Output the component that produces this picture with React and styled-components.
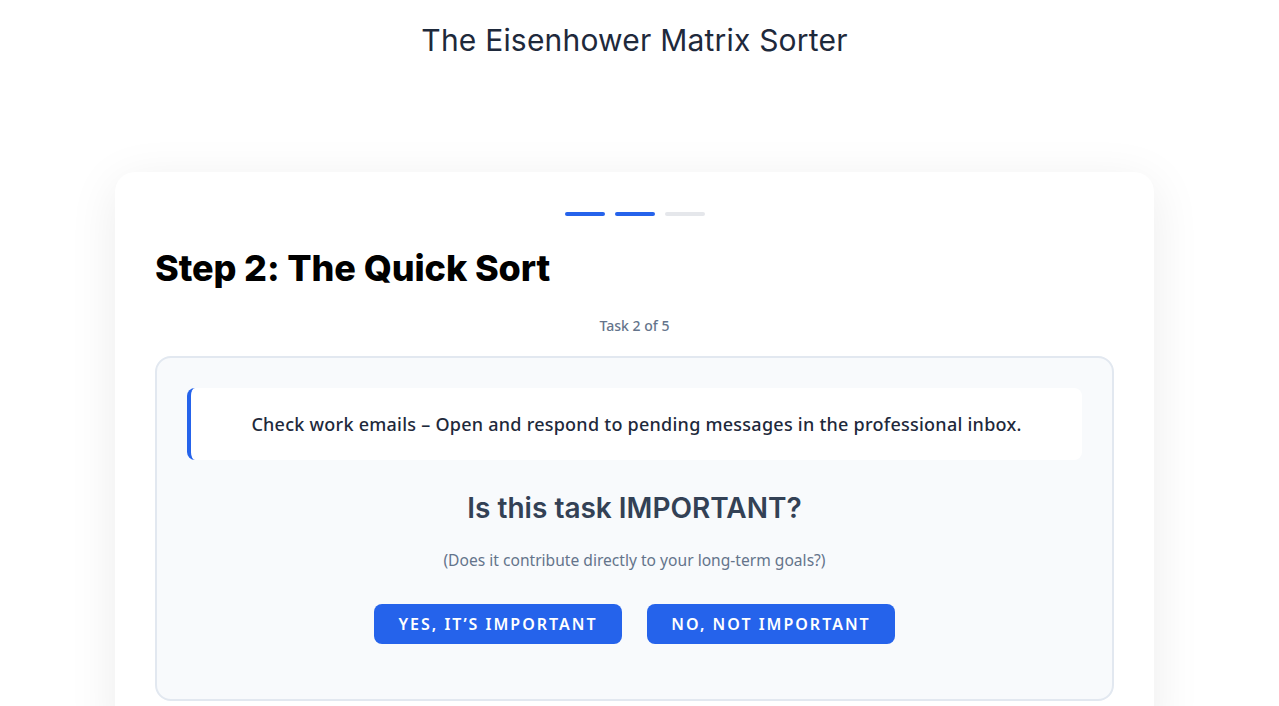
import React from 'react';
import styled, { createGlobalStyle } from 'styled-components';

const GlobalStyle = createGlobalStyle`
  * {
    box-sizing: border-box;
  }

  body {
    margin: 0;
    background: #ffffff;
    font-family: 'Noto Sans', 'Open Sans', sans-serif;
    color: #1e293b;
  }
`;

const Page = styled.div`
  display: flex;
  flex-direction: column;
  align-items: center;
  padding: 18px 20px 60px 10px;
`;

const AppTitle = styled.h1`
  margin: 0 0 110px 0;
  font-family: 'Inter', sans-serif;
  font-weight: 400;
  font-size: 30px;
  letter-spacing: 0.2px;
  line-height: 44px;
  color: #1e293b;
`;

const Card = styled.section`
  width: 1039px;
  background: #ffffff;
  border-radius: 20px;
  padding: 40px 40px 40px;
  box-shadow: 0 10px 50px rgba(0, 0, 0, 0.08);
`;

const Progress = styled.div`
  display: flex;
  justify-content: center;
  gap: 10px;
`;

const Dash = styled.span`
  width: 40px;
  height: 4px;
  border-radius: 2px;
  background: ${({ $active }) => ($active ? '#2563eb' : '#e5e7eb')};
`;

const StepTitle = styled.h2`
  margin: 24px 0 0 0;
  font-family: 'Inter', sans-serif;
  font-weight: 800;
  font-size: 36px;
  letter-spacing: -0.1px;
  line-height: 56px;
  color: #000000;
`;

const Counter = styled.div`
  margin-top: 20px;
  text-align: center;
  font-size: 14px;
  font-weight: 500;
  color: #64748b;
`;

const SortBox = styled.div`
  margin-top: 21px;
  border: 2px solid #e2e8f0;
  border-radius: 16px;
  background: #f8fafc;
  padding: 30px 30px 55px;
  display: flex;
  flex-direction: column;
  align-items: center;
`;

const TaskCard = styled.div`
  align-self: stretch;
  background: #ffffff;
  border-left: 4px solid #2563eb;
  border-radius: 8px;
  padding: 22px 20px;
  text-align: center;
  font-size: 18px;
  letter-spacing: 0.25px;
  line-height: 28px;
  font-weight: 500;
  color: #1e293b;
`;

const Question = styled.h3`
  margin: 28px 0 0 0;
  font-family: 'Inter', sans-serif;
  font-weight: 600;
  font-size: 28px;
  line-height: 40px;
  color: #334155;
`;

const Hint = styled.p`
  margin: 20px 0 0 0;
  font-size: 15.6px;
  line-height: 24px;
  color: #64748b;
`;

const Actions = styled.div`
  display: flex;
  gap: 25px;
  margin-top: 32px;
`;

const Choice = styled.button`
  width: 248px;
  height: 40px;
  border: none;
  border-radius: 8px;
  background: #2563eb;
  color: #ffffff;
  font-family: 'Noto Sans', 'Open Sans', sans-serif;
  font-size: 16px;
  font-weight: 600;
  letter-spacing: 2px;
  text-transform: uppercase;
  cursor: pointer;
`;

const steps = [true, true, false];

export default function App() {
  return (
    <>
      <GlobalStyle />
      <Page>
        <AppTitle>The Eisenhower Matrix Sorter</AppTitle>
        <Card>
          <Progress>
            {steps.map((active, i) => (
              <Dash key={i} $active={active} />
            ))}
          </Progress>
          <StepTitle>Step 2: The Quick Sort</StepTitle>
          <Counter>Task 2 of 5</Counter>
          <SortBox>
            <TaskCard>
              Check work emails – Open and respond to pending messages in the professional inbox.
            </TaskCard>
            <Question>Is this task IMPORTANT?</Question>
            <Hint>(Does it contribute directly to your long-term goals?)</Hint>
            <Actions>
              <Choice>Yes, it’s important</Choice>
              <Choice>No, not important</Choice>
            </Actions>
          </SortBox>
        </Card>
      </Page>
    </>
  );
}
